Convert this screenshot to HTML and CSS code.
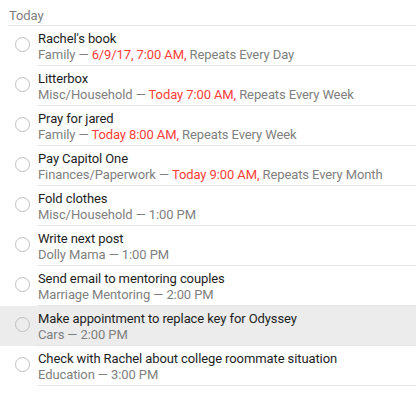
FILE: index.html
```html
<!DOCTYPE html>
<html>
<head>
<meta charset="utf-8">
<link rel="stylesheet" href="styles.css">
</head>
<body>
<div class="list">
  <div class="header"><span>Today</span></div>
  <div class="row">
    <div class="check"></div>
    <div class="body">
      <div class="title">Rachel's book</div>
      <div class="sub">Family — <span class="due">6/9/17, 7:00 AM,</span> Repeats Every Day</div>
    </div>
  </div>
  <div class="row">
    <div class="check"></div>
    <div class="body">
      <div class="title">Litterbox</div>
      <div class="sub">Misc/Household — <span class="due">Today 7:00 AM,</span> Repeats Every Week</div>
    </div>
  </div>
  <div class="row">
    <div class="check"></div>
    <div class="body">
      <div class="title">Pray for jared</div>
      <div class="sub">Family — <span class="due">Today 8:00 AM,</span> Repeats Every Week</div>
    </div>
  </div>
  <div class="row">
    <div class="check"></div>
    <div class="body">
      <div class="title">Pay Capitol One</div>
      <div class="sub">Finances/Paperwork — <span class="due">Today 9:00 AM,</span> Repeats Every Month</div>
    </div>
  </div>
  <div class="row">
    <div class="check"></div>
    <div class="body">
      <div class="title">Fold clothes</div>
      <div class="sub">Misc/Household — 1:00 PM</div>
    </div>
  </div>
  <div class="row">
    <div class="check"></div>
    <div class="body">
      <div class="title">Write next post</div>
      <div class="sub">Dolly Mama — 1:00 PM</div>
    </div>
  </div>
  <div class="row">
    <div class="check"></div>
    <div class="body">
      <div class="title">Send email to mentoring couples</div>
      <div class="sub">Marriage Mentoring — 2:00 PM</div>
    </div>
  </div>
  <div class="row selected">
    <div class="check"></div>
    <div class="body">
      <div class="title">Make appointment to replace key for Odyssey</div>
      <div class="sub">Cars — 2:00 PM</div>
    </div>
  </div>
  <div class="row">
    <div class="check"></div>
    <div class="body">
      <div class="title">Check with Rachel about college roommate situation</div>
      <div class="sub">Education — 3:00 PM</div>
    </div>
  </div>
</div>
</body>
</html>
```

FILE: styles.css
```css
html, body {
  margin: 0;
  padding: 0;
  background: #ffffff;
}
body {
  font-family: Roboto, "Liberation Sans", sans-serif;
  font-size: 13px;
  letter-spacing: -0.1px;
  -webkit-font-smoothing: antialiased;
}
.list {
  display: flex;
  flex-direction: column;
}
.header {
  height: 26px;
  margin-left: 8px;
  border-bottom: 1px solid #e6e6e6;
  box-sizing: border-box;
  padding: 8px 0 0 1px;
  color: #808080;
  line-height: 16px;
}
.row {
  height: 40px;
  display: flex;
  align-items: stretch;
}
.row.selected {
  background: #ececec;
}
.check {
  flex: none;
  width: 15px;
  height: 15px;
  box-sizing: border-box;
  border: 1px solid #bfbfbf;
  border-radius: 50%;
  background: #fff;
  margin: 11px 8px 0 15px;
}
.row.selected .check {
  background: transparent;
}
.body {
  flex: 1;
  min-width: 0;
  padding-top: 5px;
  box-sizing: border-box;
  border-bottom: 1px solid #e6e6e6;
}
.title {
  color: #1e1e1e;
  line-height: 16px;
  white-space: nowrap;
}
.sub {
  color: #7f7f7f;
  line-height: 16px;
  white-space: nowrap;
}
.due {
  color: #fc3d39;
}
```
